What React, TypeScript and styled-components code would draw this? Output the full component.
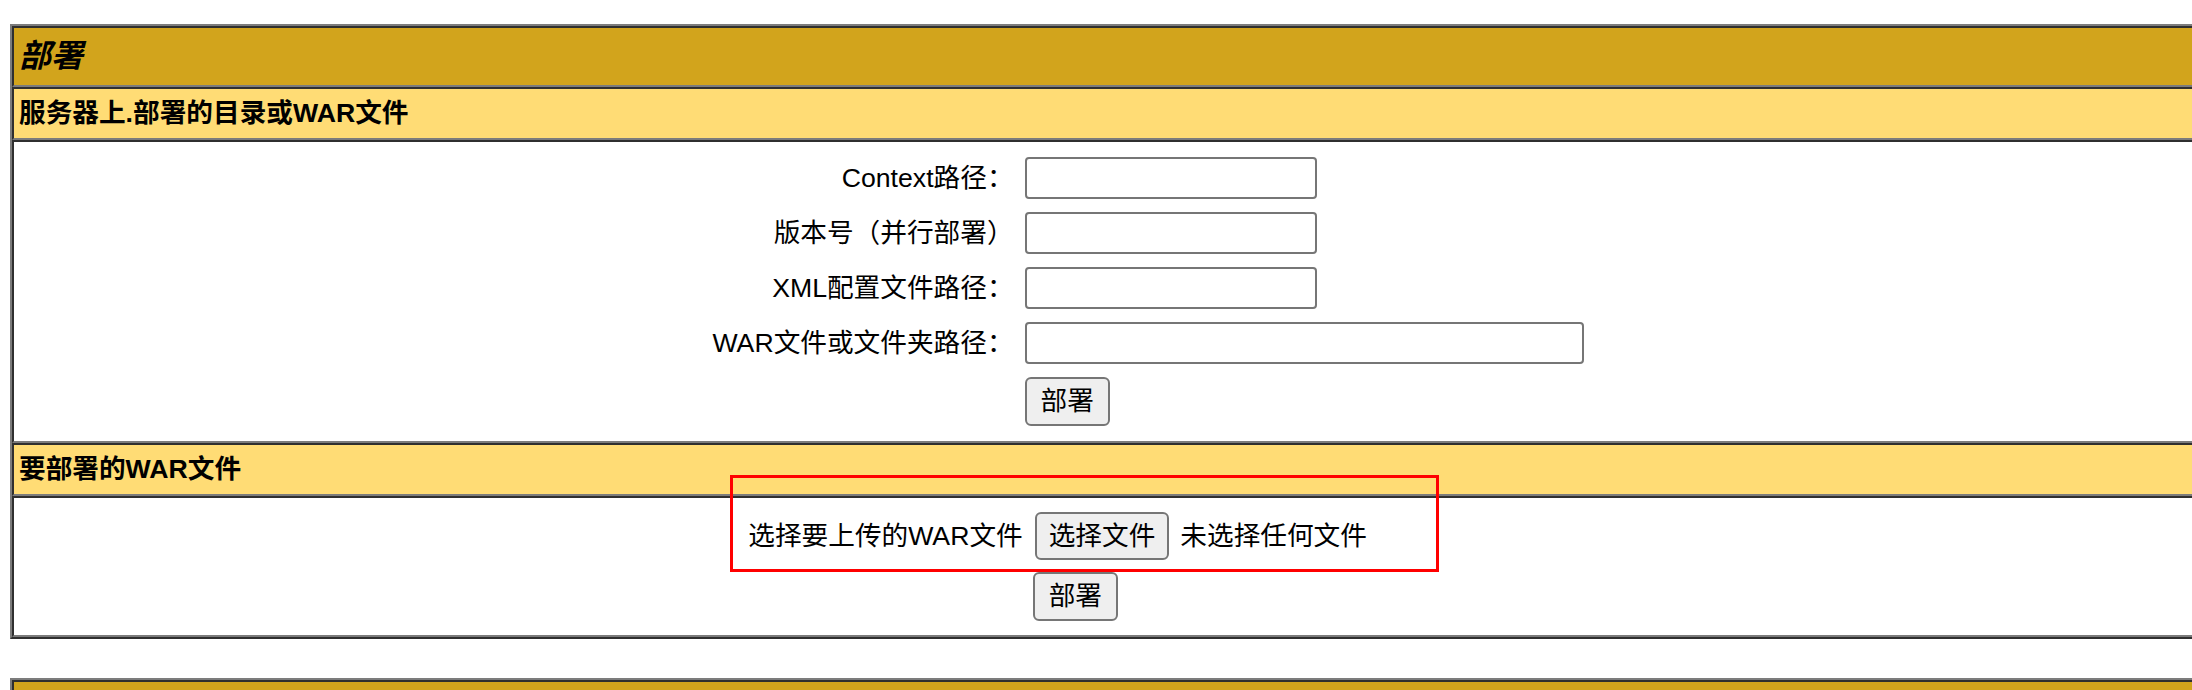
import React from 'react';
import styled, { createGlobalStyle } from 'styled-components';

const GlobalStyle = createGlobalStyle`
  html, body {
    margin: 0;
    overflow: hidden;
    background: #ffffff;
  }
  body {
    padding: 24px 0 0 10px;
    font-family: "Liberation Sans", "Noto Sans CJK SC", sans-serif;
    color: #000000;
  }
`;

const light = '#7c7c7c';
const dark = '#2f2f2f';

// outer table, outset border
const Table = styled.div<{ $gap?: number }>`
  position: relative;
  width: 2276px;
  box-sizing: border-box;
  margin-top: ${({ $gap }) => $gap ?? 0}px;
  display: flex;
  flex-direction: column;
  border: 2px solid;
  border-color: ${light} ${dark} ${dark} ${light};
`;

// each row is a single cell with inset border
const Cell = styled.div<{ $kind: 'title' | 'header' | 'body' }>`
  min-height: ${({ $kind }) => ($kind === 'title' ? '57px' : '0')};
  box-sizing: border-box;
  border: 2px solid;
  border-color: ${dark} ${light} ${light} ${dark};
  padding: ${({ $kind }) => ($kind === 'body' ? '0' : '2px 5px')};
  background: ${({ $kind }) =>
    $kind === 'title' ? '#d2a41c' : $kind === 'header' ? '#ffdc75' : '#ffffff'};
  font-size: ${({ $kind }) => ($kind === 'title' ? '32px' : '26.67px')};
  font-weight: ${({ $kind }) => ($kind === 'body' ? 'normal' : 'bold')};
  font-style: ${({ $kind }) => ($kind === 'title' ? 'italic' : 'normal')};
  line-height: ${({ $kind }) => ($kind === 'title' ? '53px' : '45px')};
`;

const FormGrid = styled.div<{ $pad: number; $colGap: number; $rowGap: number }>`
  display: grid;
  grid-template-columns: auto auto;
  justify-content: center;
  align-items: center;
  column-gap: ${({ $colGap }) => $colGap}px;
  row-gap: ${({ $rowGap }) => $rowGap}px;
  padding: ${({ $pad }) => $pad}px 0;
`;

const Label = styled.label`
  text-align: right;
  font-size: 26.67px;
  line-height: 42px;
  white-space: nowrap;
`;

const TextInput = styled.input<{ $width: number }>`
  box-sizing: border-box;
  width: ${({ $width }) => $width}px;
  height: 42px;
  margin: 0;
  border: 2px solid #767676;
  border-radius: 4px;
  background: #ffffff;
  font-size: 26.67px;
  padding: 0 4px;
  outline: none;
`;

const Button = styled.button`
  box-sizing: border-box;
  height: 49px;
  margin: 0;
  padding: 0 14px;
  border: 2px solid #767676;
  border-radius: 6px;
  background: #efefef;
  color: #000000;
  font-family: "Liberation Sans", "Noto Sans CJK SC", sans-serif;
  font-size: 26.67px;
  line-height: 45px;
  justify-self: start;
`;

const FileField = styled.div`
  width: 515px;
  display: flex;
  align-items: center;
  font-size: 26.67px;
  white-space: nowrap;
`;

const FileButton = styled(Button)`
  height: 48px;
  padding: 0 12px;
  margin: 0 11px 0 2px;
`;

const Highlight = styled.div`
  position: absolute;
  left: 718px;
  top: 449px;
  width: 709px;
  height: 97px;
  box-sizing: border-box;
  border: 3px solid #ff0000;
  pointer-events: none;
`;

const serverFields = [
  { label: 'Context路径：', width: 292 },
  { label: '版本号（并行部署）', width: 292 },
  { label: 'XML配置文件路径：', width: 292 },
  { label: 'WAR文件或文件夹路径：', width: 559 },
];

const App: React.FC = () => {
  return (
    <>
      <GlobalStyle />
      <Table>
        <Cell $kind="title">部署</Cell>
        <Cell $kind="header">服务器上.部署的目录或WAR文件</Cell>
        <Cell $kind="body">
          <FormGrid $pad={15} $colGap={11} $rowGap={13}>
            {serverFields.map((f) => (
              <React.Fragment key={f.label}>
                <Label>{f.label}</Label>
                <TextInput $width={f.width} type="text" />
              </React.Fragment>
            ))}
            <span />
            <Button type="button">部署</Button>
          </FormGrid>
        </Cell>
        <Cell $kind="header">要部署的WAR文件</Cell>
        <Cell $kind="body">
          <FormGrid $pad={14} $colGap={10} $rowGap={12}>
            <Label>选择要上传的WAR文件</Label>
            <FileField>
              <FileButton type="button">选择文件</FileButton>
              <span>未选择任何文件</span>
            </FileField>
            <span />
            <Button type="button">部署</Button>
          </FormGrid>
        </Cell>
        <Highlight />
      </Table>
      <Table $gap={39}>
        <Cell $kind="title" />
      </Table>
    </>
  );
};

export default App;
